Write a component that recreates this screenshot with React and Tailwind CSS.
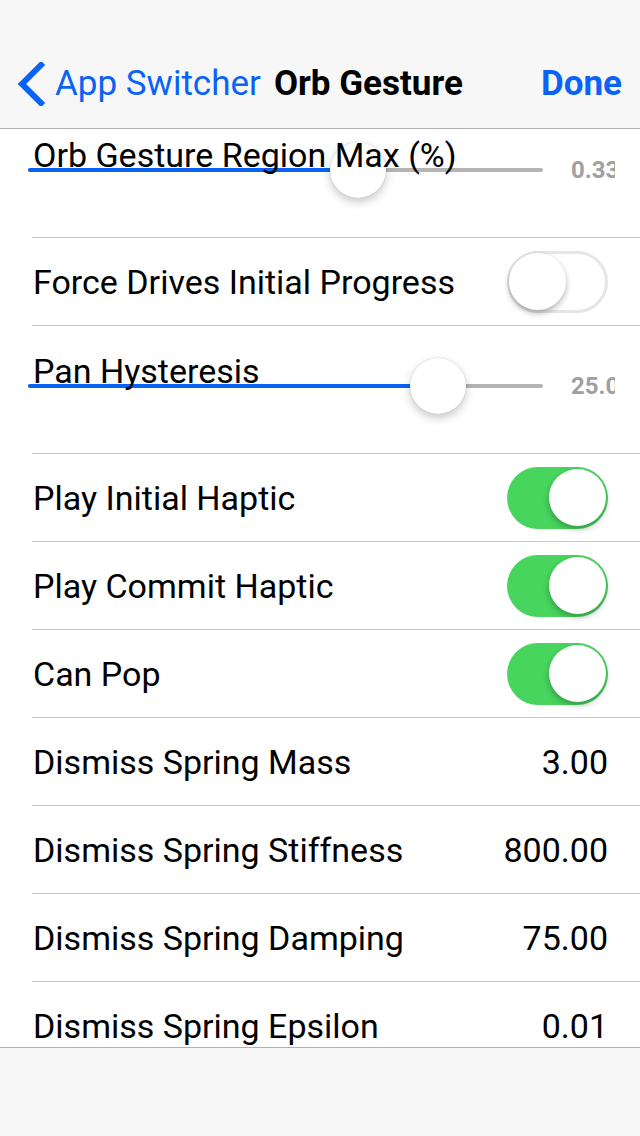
import React from 'react';

const font = { fontFamily: 'Roboto, "Noto Sans", sans-serif' };

const rows = [
  { type: 'slider', label: 'Orb Gesture Region Max (%)', value: '0.33', pos: 0.658 },
  { type: 'switch', label: 'Force Drives Initial Progress', on: false },
  { type: 'slider', label: 'Pan Hysteresis', value: '25.0', pos: 0.832 },
  { type: 'switch', label: 'Play Initial Haptic', on: true },
  { type: 'switch', label: 'Play Commit Haptic', on: true },
  { type: 'switch', label: 'Can Pop', on: true },
  { type: 'value', label: 'Dismiss Spring Mass', value: '3.00' },
  { type: 'value', label: 'Dismiss Spring Stiffness', value: '800.00' },
  { type: 'value', label: 'Dismiss Spring Damping', value: '75.00' },
  { type: 'value', label: 'Dismiss Spring Epsilon', value: '0.01' },
];

const Switch = ({ on }) => (
  <div
    className={`relative w-[101px] h-[62px] rounded-full ${
      on ? 'bg-[#47d55e]' : 'bg-white border-[3px] border-[#e6e6e6]'
    }`}
  >
    <div
      className={`absolute w-[57px] h-[57px] rounded-full bg-white shadow-[0_3px_6px_rgba(0,0,0,0.3)] ${
        on ? 'top-[2.5px] right-[2px]' : 'top-[-0.5px] left-[-1px]'
      }`}
    />
  </div>
);

const SliderRow = ({ label, value, pos }) => (
  <div className="relative h-[128px] border-b border-[#c8c7cc] ml-[32px]">
    {/* track */}
    <div className="absolute left-[-4px] top-[58px] w-[515px] h-[4px]">
      <div className="relative h-full">
        <div className="absolute inset-0 rounded-full bg-[#b4b4b4]" />
        <div
          className="absolute left-0 top-0 h-full rounded-full bg-[#0a63f6]"
          style={{ width: `${28 + pos * 459}px` }}
        />
        <div
          className="absolute top-[-26px] w-[56px] h-[56px] rounded-full bg-white shadow-[0_4px_10px_rgba(0,0,0,0.22),0_0_1px_rgba(0,0,0,0.25)]"
          style={{ left: `${pos * 459}px` }}
        />
      </div>
    </div>
    <div className="relative pt-[25px] pl-[1px] text-[34px] leading-[40px] text-black">{label}</div>
    <div className="absolute left-[539px] top-[45px] w-[44px] overflow-hidden whitespace-nowrap text-[24px] leading-[30px] font-bold text-[#a0a0a0]">
      {value}
    </div>
  </div>
);

const PlainRow = ({ label, children }) => (
  <div className="flex items-center justify-between h-[88px] border-b border-[#c8c7cc] ml-[32px] pr-[32px]">
    <span className="text-[34px] leading-[40px] text-black pl-[1px]">{label}</span>
    {children}
  </div>
);

export default function App() {
  return (
    <div className="w-[640px] h-[1136px] flex flex-col bg-white overflow-hidden" style={font}>
      {/* nav bar */}
      <div className="relative z-10 h-[129px] shrink-0 bg-[#f7f7f8] border-b border-[#b2b2b2] pt-[40px]">
        <div className="flex items-center h-[88px] pl-[17px] pr-[18px]">
          <svg width="28" height="44" viewBox="0 0 28 44" className="shrink-0">
            <polyline
              points="24,3 5,22 24,41"
              fill="none"
              stroke="#0a63f6"
              strokeWidth="6"
              strokeLinecap="square"
            />
          </svg>
          <span className="ml-[10px] text-[35px] text-[#0a63f6]">App Switcher</span>
          <span className="ml-[13px] text-[35px] font-bold text-black">Orb Gesture</span>
          <span className="flex-1" />
          <span className="text-[35px] font-bold text-[#0a63f6]">Done</span>
        </div>
      </div>

      {/* scrolled list */}
      <div className="flex-1 overflow-hidden">
        <div className="-mt-[19px]">
          {rows.map((r) =>
            r.type === 'slider' ? (
              <SliderRow key={r.label} {...r} />
            ) : r.type === 'switch' ? (
              <PlainRow key={r.label} label={r.label}>
                <Switch on={r.on} />
              </PlainRow>
            ) : (
              <PlainRow key={r.label} label={r.label}>
                <span className="text-[34px] leading-[40px] text-black">{r.value}</span>
              </PlainRow>
            )
          )}
        </div>
      </div>

      {/* toolbar */}
      <div className="h-[89px] shrink-0 bg-[#f7f7f8] border-t border-[#b2b2b2]" />
    </div>
  );
}
